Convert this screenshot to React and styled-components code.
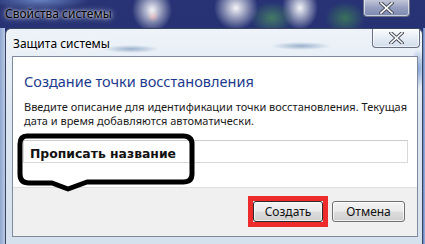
import React from 'react'
import styled, { createGlobalStyle } from 'styled-components'

const GlobalStyle = createGlobalStyle`
  html, body {
    margin: 0;
    padding: 0;
    width: 425px;
    height: 244px;
    overflow: hidden;
    background: #1d2766;
  }
`

const Desktop = styled.div`
  width: 425px;
  height: 244px;
  overflow: hidden;
  font-family: 'Noto Sans', 'DejaVu Sans', sans-serif;
  background-color: #222c6e;
  background-repeat: no-repeat;
  background-image:
    linear-gradient(90deg, #8fa6cf 0%, #b9c9e3 100%),
    linear-gradient(90deg, #5f7fc0 0%, #9fb5dc 100%),
    radial-gradient(ellipse 20px 22px at 152px 10px, rgba(255, 255, 255, 0.95), rgba(255, 255, 255, 0) 100%),
    radial-gradient(ellipse 6px 6px at 153px 16px, rgba(220, 80, 70, 0.8), rgba(220, 80, 70, 0) 100%),
    radial-gradient(ellipse 22px 22px at 236px 8px, rgba(255, 255, 255, 0.95), rgba(255, 255, 255, 0) 100%),
    radial-gradient(ellipse 22px 16px at 272px 18px, rgba(70, 130, 100, 0.9), rgba(70, 130, 100, 0) 100%),
    radial-gradient(ellipse 18px 22px at 300px 8px, rgba(255, 255, 255, 0.95), rgba(255, 255, 255, 0) 100%),
    radial-gradient(ellipse 20px 16px at 345px 18px, rgba(60, 120, 90, 0.9), rgba(60, 120, 90, 0) 100%),
    radial-gradient(ellipse 50px 10px at 40px 0px, rgba(120, 150, 210, 0.8), rgba(120, 150, 210, 0) 100%),
    linear-gradient(180deg, #273375 0%, #1f2a68 100%);
  background-size:
    5px 216px,
    2px 216px,
    auto, auto, auto, auto, auto, auto, auto, auto;
  background-position:
    0 28px,
    423px 28px,
    0 0, 0 0, 0 0, 0 0, 0 0, 0 0, 0 0, 0 0;
`

const OuterTitleBar = styled.div`
  height: 28px;
  display: flex;
  align-items: center;
  padding-left: 5px;
  box-sizing: border-box;
`

const TitleText = styled.span`
  font-size: 12px;
  color: #000;
  text-shadow: 0 0 6px rgba(255, 255, 255, 0.9), 0 0 3px rgba(255, 255, 255, 0.9);
  line-height: 1;
  margin-top: ${props => props.offset || 0}px;
`

const CloseButton = styled.div`
  margin-left: auto;
  align-self: flex-start;
  width: ${props => props.w}px;
  height: ${props => props.h}px;
  margin-top: ${props => props.top}px;
  margin-right: ${props => props.right}px;
  box-sizing: border-box;
  border: 1px solid #6b7184;
  border-top: none;
  border-radius: 0 0 4px 4px;
  background: linear-gradient(180deg, rgba(255, 255, 255, 0.75) 0%, rgba(225, 232, 242, 0.6) 50%, rgba(190, 205, 225, 0.55) 100%);
  box-shadow: inset 0 0 0 1px rgba(255, 255, 255, 0.6);
  display: flex;
  align-items: center;
  justify-content: center;
`

const InnerWindow = styled.div`
  margin-left: 5px;
  width: 418px;
  height: 220px;
  box-sizing: border-box;
  border: 1px solid #39425e;
  border-bottom: none;
  border-radius: 6px 6px 0 0;
  background-color: #dfe8f2;
  background-image:
    radial-gradient(ellipse 28px 4px at 125px 20px, rgba(120, 150, 185, 0.7), rgba(120, 150, 185, 0) 100%),
    radial-gradient(ellipse 30px 4px at 295px 17px, rgba(120, 150, 185, 0.7), rgba(120, 150, 185, 0) 100%),
    radial-gradient(ellipse 8px 20px at 412px 40px, rgba(90, 130, 200, 0.7), rgba(90, 130, 200, 0) 100%),
    linear-gradient(180deg, #eef3f9 0%, #dce6f1 40%, #d6e1ee 100%);
  display: flex;
  flex-direction: column;
`

const InnerTitleBar = styled.div`
  height: 27px;
  display: flex;
  align-items: center;
  padding-left: 7px;
  box-sizing: border-box;
`

const Content = styled.div`
  margin-left: 6px;
  width: 406px;
  height: 181px;
  box-sizing: border-box;
  border: 1px solid #7f8a9c;
  display: flex;
  flex-direction: column;
  background: #fff;
`

const WhiteSection = styled.div`
  position: relative;
  height: 131px;
  padding: 14px 0 0 11px;
  box-sizing: border-box;
  border-bottom: 1px solid #dfdfdf;
`

const Heading = styled.div`
  font-size: 14.5px;
  color: #1c3a8c;
  line-height: 20px;
  white-space: nowrap;
`

const Description = styled.div`
  margin-top: 9px;
  font-size: 11px;
  color: #1a1a1a;
  line-height: 14px;
  white-space: nowrap;
`

const NameInput = styled.div`
  margin-top: 12px;
  margin-left: -1px;
  width: 385px;
  height: 23px;
  box-sizing: border-box;
  border: 1px solid #d7d9dd;
  border-top-color: #c9ccd1;
  background: #fff;
`

const Bubble = styled.div`
  position: absolute;
  left: 2px;
  top: 75px;
  width: 182px;
  height: 62px;

  svg {
    position: absolute;
    left: 0;
    top: 0;
  }
`

const BubbleText = styled.span`
  position: absolute;
  left: 15px;
  top: 14px;
  font-family: 'DejaVu Sans', sans-serif;
  font-weight: bold;
  font-size: 12.4px;
  color: #111;
  white-space: nowrap;
`

const Footer = styled.div`
  flex: 1;
  background: #f0f0f0;
  display: flex;
  align-items: center;
  justify-content: flex-end;
  padding-right: 12px;
  padding-bottom: 1px;
`

const Highlight = styled.div`
  border: 5px solid #ee2b2b;
  display: flex;
`

const Button = styled.div`
  width: ${props => props.w}px;
  height: 21px;
  margin-left: ${props => props.gap || 0}px;
  box-sizing: border-box;
  border: 1px solid ${props => (props.primary ? '#2a2a2a' : '#707070')};
  border-radius: 3px;
  background: linear-gradient(180deg, #f3f3f3 0%, #ebebeb 48%, #dcdcdc 52%, #cfcfcf 100%);
  box-shadow: inset 0 0 0 1px rgba(255, 255, 255, 0.7);
  display: flex;
  align-items: center;
  justify-content: center;
  font-size: 12px;
  color: #111;
`

const CloseIcon = ({ size }) => (
  <svg width={size} height={size * 0.8} viewBox='0 0 15 12'>
    <path d='M2 1 L13 11 M13 1 L2 11' stroke='#4a4f5c' strokeWidth='3.6' strokeLinecap='square' />
    <path d='M2 1 L13 11 M13 1 L2 11' stroke='#ffffff' strokeWidth='1.6' strokeLinecap='square' />
  </svg>
)

const App = () => (
  <>
    <GlobalStyle />
    <Desktop>
      <OuterTitleBar>
        <TitleText offset={0}>Свойства системы</TitleText>
        <CloseButton w={47} h={18} top={-1} right={15}>
          <CloseIcon size={15} />
        </CloseButton>
      </OuterTitleBar>
      <InnerWindow>
        <InnerTitleBar>
          <TitleText offset={2}>Защита системы</TitleText>
          <CloseButton w={48} h={19} top={0} right={2}>
            <CloseIcon size={15} />
          </CloseButton>
        </InnerTitleBar>
        <Content>
          <WhiteSection>
            <Heading>Создание точки восстановления</Heading>
            <Description>
              Введите описание для идентификации точки восстановления. Текущая
              <br />
              дата и время добавляются автоматически.
            </Description>
            <NameInput />
            <Bubble>
              <svg width='182' height='62' viewBox='0 0 182 62'>
                <path
                  d='M12 4 H168 Q177 4 177 12 V42 Q177 50 168 50 H72 L53 57 L37 51 H14 Q5 51 5 42 V12 Q5 4 12 4 Z'
                  fill='none'
                  stroke='#000'
                  strokeWidth='5'
                  strokeLinejoin='round'
                />
              </svg>
              <BubbleText>Прописать название</BubbleText>
            </Bubble>
          </WhiteSection>
          <Footer>
            <Highlight>
              <Button w={70} primary>Создать</Button>
            </Highlight>
            <Button w={73} gap={4}>Отмена</Button>
          </Footer>
        </Content>
      </InnerWindow>
    </Desktop>
  </>
)

export default App
